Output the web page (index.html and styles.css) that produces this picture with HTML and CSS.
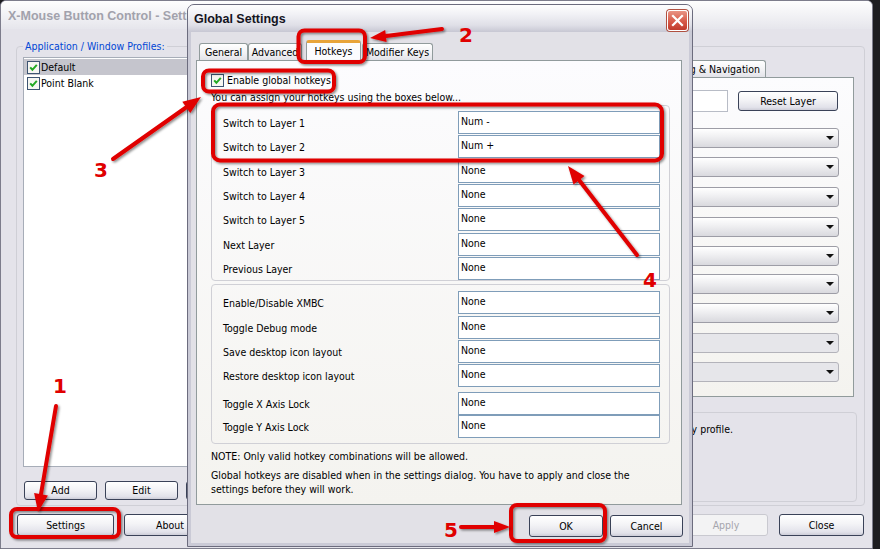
FILE: index.html
```html
<!DOCTYPE html>
<html>
<head>
<meta charset="utf-8">
<title>X-Mouse Button Control - Global Settings</title>
<link rel="stylesheet" href="styles.css">
</head>
<body>
<div class="desk">

  <div class="main">
    <div class="mtitle"><span class="mtext">X-Mouse Button Control - Settings</span></div>
    <div class="mbody">
      <div class="mrow">
        <div class="group lgroup">
          <div class="legend">Application / Window Profiles:</div>
          <div class="listbox">
            <div class="item sel">
              <svg class="chk" width="13" height="13" viewBox="0 0 13 13"><rect x=".5" y=".5" width="12" height="12" fill="#f6f6f2" stroke="#3d5472"/><polyline points="3.2,6.4 5.4,8.8 9.8,3.9" fill="none" stroke="#22a823" stroke-width="2"/></svg>
              <span>Default</span>
            </div>
            <div class="item">
              <svg class="chk" width="13" height="13" viewBox="0 0 13 13"><rect x=".5" y=".5" width="12" height="12" fill="#f6f6f2" stroke="#3d5472"/><polyline points="3.2,6.4 5.4,8.8 9.8,3.9" fill="none" stroke="#22a823" stroke-width="2"/></svg>
              <span>Point Blank</span>
            </div>
          </div>
          <div class="btnrow">
            <div class="btn small">Add</div>
            <div class="btn small">Edit</div>
            <div class="btn small"></div>
          </div>
        </div>

        <div class="group rgroup">
          <div class="mtabs">
            <div class="mtab">Layer 1</div>
            <div class="mtab">Layer 2</div>
            <div class="mtab">Scrolling &amp; Navigation</div>
          </div>
          <div class="mpanel">
            <div class="layerrow">
              <div class="tbox"></div>
              <div class="btn reset">Reset Layer</div>
            </div>
            <div class="ddrow"><div class="dd"><span class="arr"></span></div></div>
            <div class="ddrow"><div class="dd"><span class="arr"></span></div></div>
            <div class="ddrow m1"><div class="dd"><span class="arr"></span></div></div>
            <div class="ddrow m1"><div class="dd"><span class="arr"></span></div></div>
            <div class="ddrow"><div class="dd"><span class="arr"></span></div></div>
            <div class="ddrow mn1"><div class="dd"><span class="arr"></span></div></div>
            <div class="ddrow"><div class="dd"><span class="arr"></span></div></div>
            <div class="ddrow m1"><div class="dd off"><span class="arr"></span></div></div>
            <div class="ddrow"><div class="dd off"><span class="arr"></span></div></div>
          </div>
          <div class="group infobox">
            <div class="info">Applies to every profile.</div>
          </div>
        </div>
      </div>
      <div class="mbtns">
        <div class="btn settings">Settings</div>
        <div class="btn about">About</div>
        <div class="btn apply">Apply</div>
        <div class="btn close">Close</div>
      </div>
    </div>
  </div>

  <div class="dialog">
    <div class="dtitle">
      <span class="dtext">Global Settings</span>
      <div class="xbtn"><svg width="13" height="13" viewBox="0 0 13 13"><path d="M2 2L11 11M11 2L2 11" stroke="#fff" stroke-width="2.2" stroke-linecap="square"/></svg></div>
    </div>
    <div class="dbody">
      <div class="dtabs">
        <div class="dtab t1">General</div>
        <div class="dtab t2">Advanced</div>
        <div class="dtab t3 on">Hotkeys</div>
        <div class="dtab t4">Modifier Keys</div>
      </div>
      <div class="dpanel">
        <div class="chkrow">
          <svg class="chk" width="13" height="13" viewBox="0 0 13 13"><rect x=".5" y=".5" width="12" height="12" fill="#f6f6f2" stroke="#3d5472"/><polyline points="3.2,6.4 5.4,8.8 9.8,3.9" fill="none" stroke="#22a823" stroke-width="2"/></svg>
          <span>Enable global hotkeys</span>
        </div>
        <div class="hint">You can assign your hotkeys using the boxes below...</div>
        <div class="hgroup g1">
          <div class="hk"><span>Switch to Layer 1</span><div class="box">Num -</div></div>
          <div class="hk m1"><span>Switch to Layer 2</span><div class="box">Num +</div></div>
          <div class="hk m2"><span>Switch to Layer 3</span><div class="box">None</div></div>
          <div class="hk m1"><span>Switch to Layer 4</span><div class="box">None</div></div>
          <div class="hk m1"><span>Switch to Layer 5</span><div class="box">None</div></div>
          <div class="hk m2"><span>Next Layer</span><div class="box">None</div></div>
          <div class="hk m1"><span>Previous Layer</span><div class="box">None</div></div>
        </div>
        <div class="hgroup g2">
          <div class="hk"><span>Enable/Disable XMBC</span><div class="box">None</div></div>
          <div class="hk m2"><span>Toggle Debug mode</span><div class="box">None</div></div>
          <div class="hk m1"><span>Save desktop icon layout</span><div class="box">None</div></div>
          <div class="hk m1"><span>Restore desktop icon layout</span><div class="box">None</div></div>
          <div class="hk m5"><span>Toggle X Axis Lock</span><div class="box">None</div></div>
          <div class="hk"><span>Toggle Y Axis Lock</span><div class="box">None</div></div>
        </div>
        <p class="note">NOTE: Only valid hotkey combinations will be allowed.</p>
        <p class="note2">Global hotkeys are disabled when in the settings dialog. You have to apply and close the<br>settings before they will work.</p>
      </div>
      <div class="dbtns">
        <div class="btn ok">OK</div>
        <div class="btn cancel">Cancel</div>
      </div>
    </div>
  </div>

  <svg class="notes" width="880" height="549" viewBox="0 0 880 549">
    <defs>
      <filter id="sh" x="-20%" y="-20%" width="140%" height="140%">
        <feDropShadow dx="1.5" dy="1.5" stdDeviation="1.2" flood-color="#000" flood-opacity="0.45"/>
      </filter>
    </defs>
    <g filter="url(#sh)" fill="none" stroke="#e00000" stroke-width="4">
      <rect x="298.5" y="30.5" width="66.5" height="31.5" rx="6"/>
      <rect x="203" y="70.5" width="131" height="21" rx="6"/>
      <rect x="213" y="104.5" width="449" height="56" rx="7"/>
      <rect x="11" y="509" width="108" height="28" rx="6"/>
      <rect x="511" y="505" width="94" height="36" rx="6"/>
    </g>
    <g filter="url(#sh)" stroke="#e00000" stroke-width="4" stroke-linecap="round" fill="#e00000">
      <line x1="442" y1="29" x2="386" y2="36"/>
      <polygon stroke="none" points="370,38 385.2,30.1 386.6,42"/>
      <line x1="113" y1="159" x2="186" y2="107.5"/>
      <polygon stroke="none" points="201,97 190.3,113.1 182.3,101.7"/>
      <line x1="56" y1="406" x2="41" y2="494"/>
      <polygon stroke="none" points="38,512 47.9,495.5 34.1,493.1"/>
      <line x1="637" y1="255" x2="579" y2="180"/>
      <polygon stroke="none" points="568,166 584.5,175.9 573.5,184.5"/>
      <line x1="461" y1="527" x2="494" y2="527"/>
      <polygon stroke="none" points="510,527 494,521 494,533"/>
    </g>
    <g class="num" fill="#e00000" text-anchor="middle">
      <text x="60" y="393">1</text>
      <text x="466" y="42">2</text>
      <text x="101" y="177">3</text>
      <text x="650" y="287">4</text>
      <text x="451" y="537">5</text>
    </g>
  </svg>

</div>
</body>
</html>
```

FILE: styles.css
```css
* { box-sizing: border-box; margin: 0; padding: 0; }
html, body { width: 880px; height: 549px; overflow: hidden; }
body {
  background: #1d1d20;
  font-family: "DejaVu Sans Condensed", "Liberation Sans", sans-serif;
  font-size: 10.5px;
  line-height: 13px;
  color: #000;
}
.desk { position: relative; width: 880px; height: 549px; }

/* ---------- buttons ---------- */
.btn {
  display: flex; align-items: center; justify-content: center;
  height: 22px;
  border: 1px solid #3a4258;
  border-radius: 3px;
  background: linear-gradient(#ffffff, #f3f3f6 45%, #e2e2ea 85%, #cdcdd8);
  color: #000;
  white-space: nowrap;
}

/* ---------- main window ---------- */
.main {
  position: absolute; left: 0; top: 0;
  width: 873px; height: 549px;
  background: #e4e3ea;
  border: 1px solid #7d7d8c;
  border-radius: 6px 6px 0 0;
  display: flex; flex-direction: column;
  overflow: hidden;
}
.mtitle {
  flex: none; height: 28px;
  padding-left: 7px;
  background: linear-gradient(#fefefe, #f2f2f5 50%, #e6e6ec);
  font: bold 12.5px "Liberation Sans", sans-serif;
  line-height: 30px;
  color: #a2a2ac;
  white-space: nowrap;
}
.mtext { display: inline-block; max-width: 180px; overflow: hidden; vertical-align: top; }
.mbody {
  flex: 1;
  padding: 17px 7px 0 15px;
  display: flex; flex-direction: column;
}
.mrow { display: flex; gap: 8px; height: 460px; }
.group { border: 1px solid #cfcfd6; border-radius: 4px; }

.lgroup { width: 250px; padding: 0 6px 5px 6px; display: flex; flex-direction: column; }
.legend {
  align-self: flex-start;
  margin-top: -7px;
  padding: 0 2px;
  background: #e4e3ea;
  color: #0046d5;
  white-space: nowrap;
}
.listbox {
  margin-top: 4px; height: 410px;
  background: #fff;
  border: 1px solid #a7adb8;
  padding-top: 1px;
}
.item { height: 16px; display: flex; align-items: center; gap: 1px; padding-left: 3px; }
.item.sel { background: #c5c5cd; }
.chk { flex: none; display: block; }
.btnrow { margin-top: 14px; display: flex; gap: 8px; padding-left: 1px; }
.btn.small { width: 73px; height: 19px; }

.rgroup { flex: 1; padding: 13px 10px 3px 7px; display: flex; flex-direction: column; }
.mtabs { display: flex; justify-content: flex-end; align-items: flex-end; height: 17px; padding-right: 88px; }
.mtab {
  height: 17px; padding: 0 5px;
  border: 1px solid #919b9c; border-bottom: none;
  border-radius: 3px 3px 0 0;
  background: linear-gradient(#ffffff, #f0f0f3 60%, #e3e3e9);
  line-height: 16px; white-space: nowrap;
}
.mpanel {
  height: 320px;
  border: 1px solid #919b9c;
  background: linear-gradient(#fcfcfe, #f4f3ef);
  padding: 12px 14px 0 20px;
  display: flex; flex-direction: column;
}
.layerrow { display: flex; align-items: center; justify-content: flex-end; height: 22px; gap: 10px; }
.tbox { width: 160px; height: 22px; background: #fff; border: 1px solid #b8bcc6; }
.btn.reset { width: 100px; height: 20px; margin-right: 1px; }
.ddrow { display: flex; align-items: center; justify-content: flex-end; height: 20px; margin-top: 9px; }
.layerrow + .ddrow { margin-top: 16px; }
.ddrow.m1 { margin-top: 10px; }
.ddrow.mn1 { margin-top: 8px; }
.dd {
  position: relative;
  width: 320px; height: 20px;
  border: 1px solid #9d9da6; border-radius: 3px;
  background: linear-gradient(#ffffff, #f1f1f3 40%, #d9d9de);
}
.dd.off { background: #e6e6ea; border-color: #b3b3ba; }
.arr {
  position: absolute; right: 4px; top: 7px;
  width: 0; height: 0;
  border-left: 4px solid transparent; border-right: 4px solid transparent;
  border-top: 4px solid #111;
}
.infobox { margin-top: 15px; height: 90px; margin-right: -3px; padding: 10px 0 0 8px; }
.info { width: 442px; text-align: right; white-space: nowrap; overflow: hidden; }

.mbtns { margin-top: 8px; display: flex; padding-left: 1px; padding-right: 1px; }
.btn.settings { width: 97px; }
.btn.about { width: 92px; margin-left: 10px; }
.btn.apply { width: 84px; margin-left: auto; border-color: #c9c9d0; background: #f3f3f4; color: #a5a5ad; }
.btn.close { width: 85px; margin-left: 11px; }

/* ---------- dialog ---------- */
.dialog {
  position: absolute; left: 187px; top: 4px;
  width: 506px; height: 543px;
  border: 1px solid #6c6c7e;
  border-radius: 7px 7px 0 0;
  background: #cacad6;
  display: flex; flex-direction: column;
  overflow: hidden;
}
.dtitle {
  flex: none; height: 27px;
  display: flex; justify-content: space-between; align-items: flex-start;
  padding: 0 4px 0 6px;
  background: linear-gradient(#fefefe, #f1f1f5 35%, #dfdfe7 75%, #c7c7d3);
}
.dtext { font: bold 12.5px "Liberation Sans", sans-serif; line-height: 27px; color: #14141e; padding-top: 1px; }
.xbtn {
  margin-top: 5px;
  width: 21px; height: 21px;
  border: 1px solid #fff; border-radius: 3px;
  background: linear-gradient(#e99484, #d75a49 55%, #c03a2b);
  box-shadow: 0 0 0 1px #b05040;
  display: flex; align-items: center; justify-content: center;
}
.xbtn svg { display: block; }
.dbody {
  flex: 1;
  margin: 0 3px 3px;
  background: #e2e1e7;
  padding: 8px 7px 0 5px;
  display: flex; flex-direction: column;
}
.dtabs { display: flex; align-items: flex-end; height: 20px; padding-left: 3px; position: relative; z-index: 1; }
.dtab {
  height: 17px;
  border: 1px solid #919b9c; border-bottom: none;
  border-radius: 3px 3px 0 0;
  background: linear-gradient(#ffffff, #f1f1f4 60%, #e2e2e8);
  line-height: 16px; text-align: center; white-space: nowrap; overflow: hidden;
}
.dtab.t1 { width: 49px; }
.dtab.t2 { width: 54px; }
.dtab.t3 { width: 55px; margin-left: 4px; }
.dtab.t4 { width: 71px; margin-left: 1px; }
.dtab.on {
  height: 21px; margin-bottom: -1px;
  background: #fcfcfe;
  border-top: 3px solid #e8a43a;
  line-height: 17px;
}
.dpanel {
  height: 445px;
  border: 1px solid #919b9c;
  background: linear-gradient(#fcfcfe, #f4f3ef);
  padding: 13px 11px 0 14px;
}
.chkrow { display: flex; align-items: center; gap: 3px; height: 13px; white-space: nowrap; }
.hint { margin-top: 4px; height: 13px; white-space: nowrap; }
.hgroup { border: 1px solid #d0d0d6; border-radius: 4px; padding: 5px 9px 0 11px; }
.g1 { margin-top: 1px; }
.g2 { margin-top: 3px; padding-top: 6px; padding-bottom: 5px; }
.hk { display: flex; align-items: center; height: 23px; }
.hk span { flex: 1; padding-top: 2px; white-space: nowrap; }
.hk .box {
  width: 202px; height: 23px;
  background: #fff;
  border: 1px solid #7f9db9;
  padding: 2px 0 0 2px;
  line-height: 15px;
}
.hk.m1 { margin-top: 1px; }
.hk.m2 { margin-top: 2px; }
.hk.m5 { margin-top: 5px; }
.note { margin-top: 5px; line-height: 14px; white-space: nowrap; }
.note2 { margin-top: 5px; line-height: 14px; white-space: nowrap; }
.dbtns { display: flex; justify-content: flex-end; gap: 7px; margin-top: 10px; margin-right: -1px; }
.btn.ok { width: 74px; }
.btn.cancel { width: 73px; }

/* ---------- annotations ---------- */
.notes { position: absolute; left: 0; top: 0; z-index: 10; pointer-events: none; }
.num { font-family: "DejaVu Sans", sans-serif; font-weight: bold; font-size: 20px; }
```
